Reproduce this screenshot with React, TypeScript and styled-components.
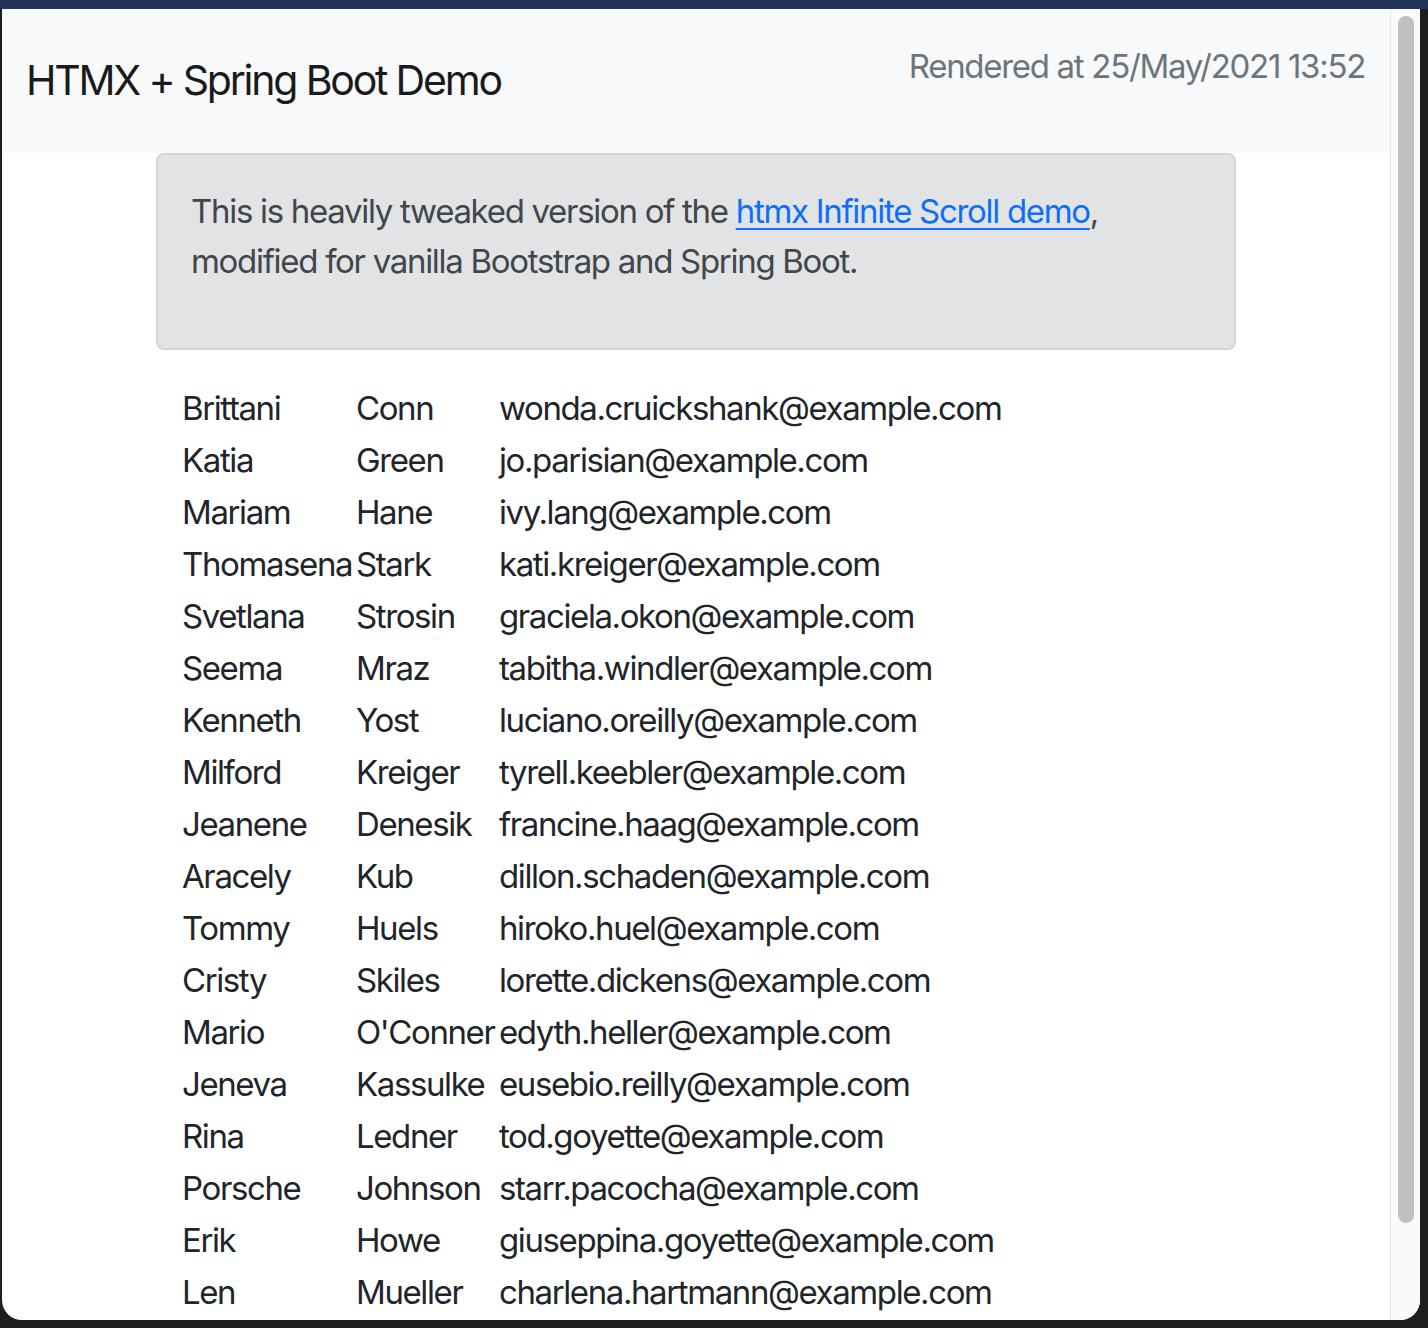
import styled, { createGlobalStyle } from "styled-components";

const GlobalStyle = createGlobalStyle`
  html, body {
    margin: 0;
    padding: 0;
    background: #1e1e1e;
    overflow: hidden;
  }
  * {
    box-sizing: border-box;
  }
`;

const people: [string, string, string][] = [
  ["Brittani", "Conn", "wonda.cruickshank@example.com"],
  ["Katia", "Green", "jo.parisian@example.com"],
  ["Mariam", "Hane", "ivy.lang@example.com"],
  ["Thomasena", "Stark", "kati.kreiger@example.com"],
  ["Svetlana", "Strosin", "graciela.okon@example.com"],
  ["Seema", "Mraz", "tabitha.windler@example.com"],
  ["Kenneth", "Yost", "luciano.oreilly@example.com"],
  ["Milford", "Kreiger", "tyrell.keebler@example.com"],
  ["Jeanene", "Denesik", "francine.haag@example.com"],
  ["Aracely", "Kub", "dillon.schaden@example.com"],
  ["Tommy", "Huels", "hiroko.huel@example.com"],
  ["Cristy", "Skiles", "lorette.dickens@example.com"],
  ["Mario", "O'Conner", "edyth.heller@example.com"],
  ["Jeneva", "Kassulke", "eusebio.reilly@example.com"],
  ["Rina", "Ledner", "tod.goyette@example.com"],
  ["Porsche", "Johnson", "starr.pacocha@example.com"],
  ["Erik", "Howe", "giuseppina.goyette@example.com"],
  ["Len", "Mueller", "charlena.hartmann@example.com"],
];

const Screen = styled.div`
  width: 1428px;
  height: 1328px;
  background: #1e1e1e;
  display: flex;
  flex-direction: column;
  font-family: Inter, "Noto Sans", "Liberation Sans", sans-serif;
`;

const TopStrip = styled.div`
  height: 9px;
  background: #22335a;
  flex-shrink: 0;
`;

const Window = styled.div`
  margin-left: 2px;
  width: 1418px;
  height: 1311px;
  background: #fff;
  border-bottom-left-radius: 20px;
  border-bottom-right-radius: 20px;
  overflow: hidden;
  display: flex;
`;

const Page = styled.div`
  flex: 1;
  overflow: hidden;
`;

const ScrollTrack = styled.div`
  width: 30px;
  background: #fafafa;
  border-left: 1px solid #e6e6e6;
  padding: 7px 0 0 7px;
`;

const ScrollThumb = styled.div`
  width: 16px;
  height: 1207px;
  border-radius: 8px;
  background: #c1c1c1;
`;

const NavBar = styled.nav`
  height: 144px;
  background: #f8f9fa;
  display: flex;
  justify-content: space-between;
  padding: 0 25px 0 24px;
`;

const Brand = styled.div`
  align-self: center;
  font-size: 41px;
  line-height: 1.5;
  color: #1a1a1a;
  letter-spacing: -2.2px;
`;

const RenderedAt = styled.div`
  margin-top: 33px;
  font-size: 33px;
  line-height: 1.5;
  color: #6c757d;
  letter-spacing: -1.3px;
`;

const Container = styled.div`
  width: 1080px;
  margin: 0 auto;
`;

const Alert = styled.div`
  background: #e2e3e5;
  border: 2px solid #d3d6d8;
  border-radius: 8px;
  padding: 32px 33px 29px;
  color: #41464b;
  font-size: 33px;
  line-height: 1.5;
  letter-spacing: -1.3px;

  p {
    margin: 0 0 33px;
  }

  a {
    color: #0d6efd;
    text-decoration: underline;
    text-underline-offset: 5px;
    text-decoration-thickness: 2px;
  }
`;

const Table = styled.table`
  width: 1017px;
  margin: 32px 0 0 23px;
  border-collapse: collapse;
  table-layout: fixed;
  color: #212529;
  font-size: 33px;
  letter-spacing: -1.4px;
`;

const Cell = styled.td<{ $w: number }>`
  padding: 0 3px;
  height: 52px;
  line-height: 52px;
  white-space: nowrap;
  overflow: visible;
  width: ${(p) => p.$w}px;
`;

export default function App() {
  return (
    <>
      <GlobalStyle />
      <Screen>
        <TopStrip />
        <Window>
          <Page>
            <NavBar>
              <Brand>HTMX + Spring Boot Demo</Brand>
              <RenderedAt>Rendered at 25/May/2021 13:52</RenderedAt>
            </NavBar>
            <Container>
              <Alert>
                <p>
                  This is heavily tweaked version of the{" "}
                  <a href="#">htmx Infinite Scroll demo</a>,<br />
                  modified for vanilla Bootstrap and Spring Boot.
                </p>
              </Alert>
              <Table>
                <tbody>
                  {people.map(([first, last, email]) => (
                    <tr key={email}>
                      <Cell $w={174}>{first}</Cell>
                      <Cell $w={143}>{last}</Cell>
                      <Cell $w={700}>{email}</Cell>
                    </tr>
                  ))}
                </tbody>
              </Table>
            </Container>
          </Page>
          <ScrollTrack>
            <ScrollThumb />
          </ScrollTrack>
        </Window>
      </Screen>
    </>
  );
}
